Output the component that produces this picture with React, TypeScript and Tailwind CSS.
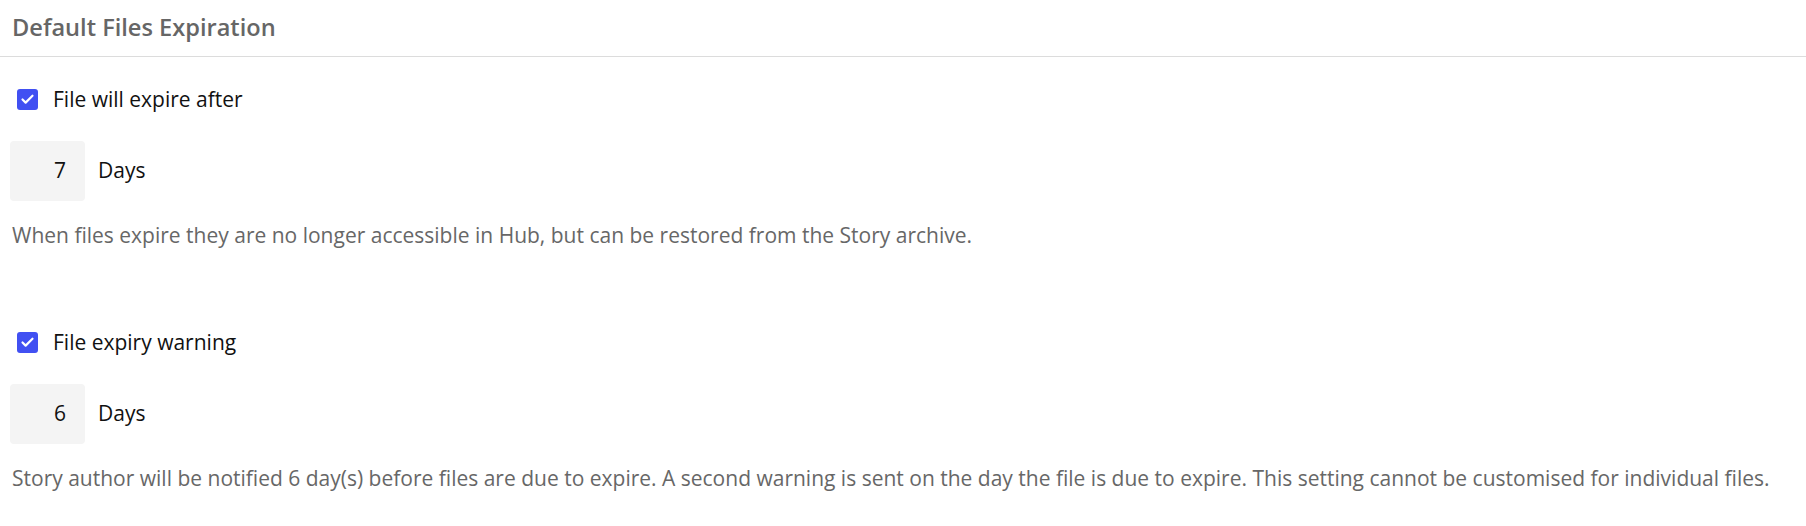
import { Check } from "lucide-react";

interface ExpirySettingProps {
  label: string;
  value: number;
  note: string;
  className?: string;
}

const ExpirySetting = ({ label, value, note, className }: ExpirySettingProps) => {
  return (
    <div className={className}>
      {/* Checkbox row */}
      <label className="flex items-center h-7 pl-[17px] gap-[15px] cursor-pointer">
        <span className="w-[21px] h-[21px] rounded-[3px] bg-[#4150f2] flex items-center justify-center">
          <Check className="w-[15px] h-[15px] text-white" strokeWidth={3.5} />
        </span>
        <span className="text-[21px] leading-[28px] text-[#111]">{label}</span>
      </label>

      {/* Days input */}
      <div className="flex items-center mt-[28px] pl-[10px]">
        <div className="w-[75px] h-[60px] rounded-[4px] bg-[#f4f4f4] flex items-center justify-end pr-[19px] text-[21px] text-[#111]">
          {value}
        </div>
        <span className="ml-[13px] text-[21px] text-[#111]">Days</span>
      </div>

      {/* Description */}
      <p className="mt-[20px] pl-[12px] text-[21px] leading-[28px] text-[#676767]">{note}</p>
    </div>
  );
};

const App = () => {
  return (
    <div className="w-[1806px] h-[526px] bg-white font-['Open_Sans',sans-serif]">
      <div className="border-b border-[#dcdcdc] pt-[11px] pb-[13px] pl-[12px]">
        <h2 className="text-[23.6px] leading-[32px] font-semibold text-[#666]">Default Files Expiration</h2>
      </div>

      <ExpirySetting
        className="mt-[28px]"
        label="File will expire after"
        value={7}
        note="When files expire they are no longer accessible in Hub, but can be restored from the Story archive."
      />

      <ExpirySetting
        className="mt-[79px]"
        label="File expiry warning"
        value={6}
        note="Story author will be notified 6 day(s) before files are due to expire. A second warning is sent on the day the file is due to expire. This setting cannot be customised for individual files."
      />
    </div>
  );
};

export default App;
